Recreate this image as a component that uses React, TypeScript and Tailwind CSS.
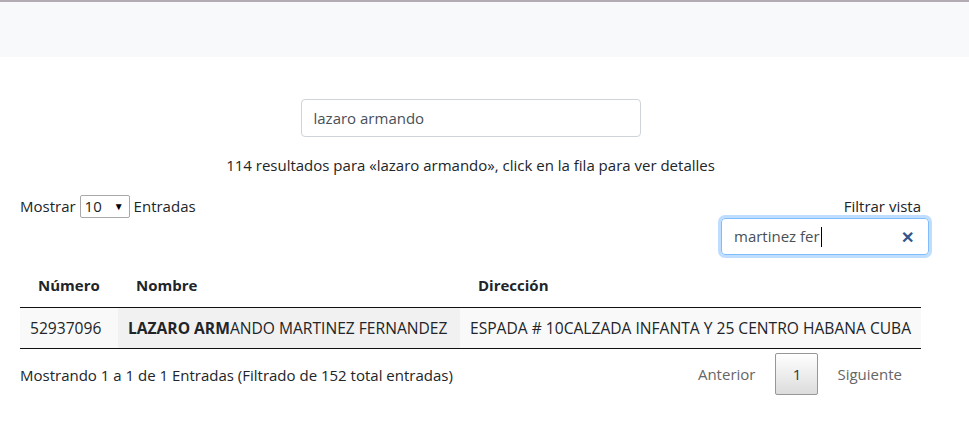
import { useState } from 'react';

const font = { fontFamily: '"Open Sans", "Noto Sans", sans-serif' };

export default function App() {
  const [query, setQuery] = useState('lazaro armando');

  return (
    <div className="min-h-[446px] bg-white text-[#212529] text-[15px]" style={font}>
      <div className="h-[57px] border-t-[2px] border-[#b3adb3] bg-[#f8f9fa]" />

      <div className="mx-[20px] w-[901px]">
        <div className="flex justify-center pt-[42px]">
          <input
            value={query}
            onChange={(e) => setQuery(e.target.value)}
            className="h-[38px] w-[340px] rounded-[4px] border border-[#ced4da] px-[12px] text-[15px] text-[#495057] outline-none"
            style={font}
          />
        </div>

        <p className="mt-[16px] text-center leading-[24px]">
          114 resultados para «lazaro armando», click en la fila para ver detalles
        </p>

        <div className="mt-[14px] flex items-start justify-between">
          <div className="mt-[4px] flex items-center gap-[4px]">
            <span>Mostrar</span>
            <div className="flex h-[23px] w-[50px] items-center justify-between rounded-[2px] border border-[#a9a9a9] pl-[4px] pr-[5px]">
              <span>10</span>
              <span className="text-[10px] text-black">▼</span>
            </div>
            <span>Entradas</span>
          </div>
          <div className="mt-[3px] flex flex-col items-end">
            <span className="leading-[24px]">Filtrar vista</span>
            <div className="mr-[-8px] flex h-[37px] w-[208px] items-center rounded-[4px] border border-[#80bdff] pl-[12px] pr-[14px] shadow-[0_0_0_3px_rgba(0,123,255,0.25)]">
              <div className="flex flex-1 items-center text-[#495057]">
                <span>martinez fer</span>
                <span className="ml-[1px] h-[20px] w-px bg-black" />
              </div>
              <span className="text-[16px] font-bold leading-none text-[#34558b]">✕</span>
            </div>
          </div>
        </div>

        <table className="mt-[8px] w-full table-fixed border-collapse">
          <thead>
            <tr className="border-b border-[#111]">
              <th className="w-[98px] px-[18px] py-[10px] text-left font-bold leading-[24px]">Número</th>
              <th className="w-[342px] px-[18px] py-[10px] text-left font-bold leading-[24px]">Nombre</th>
              <th className="px-[18px] py-[10px] text-left font-bold leading-[24px]">Dirección</th>
            </tr>
          </thead>
          <tbody className="text-[15.6px]">
            <tr className="border-b border-[#111] bg-[#f9f9f9]">
              <td className="px-[10px] py-[8px] leading-[24px]">52937096</td>
              <td className="whitespace-nowrap bg-[#f1f1f1] px-[10px] py-[8px] leading-[24px]">
                <b>LAZARO ARM</b>ANDO MARTINEZ FERNANDEZ
              </td>
              <td className="whitespace-nowrap px-[10px] py-[8px] leading-[24px]">
                ESPADA # 10CALZADA INFANTA Y 25 CENTRO HABANA CUBA
              </td>
            </tr>
          </tbody>
        </table>

        <div className="flex items-start justify-between">
          <span className="mt-[14px] leading-[24px]">
            Mostrando 1 a 1 de 1 Entradas (Filtrado de 152 total entradas)
          </span>
          <div className="mt-[4px] flex items-center">
            <span className="px-[20px] text-[#666]">Anterior</span>
            <span className="flex h-[42px] w-[43px] items-center justify-center rounded-[2px] border border-[#979797] bg-gradient-to-b from-white to-[#dcdcdc] text-[#333]">
              1
            </span>
            <span className="px-[19px] text-[#666]">Siguiente</span>
          </div>
        </div>
      </div>
    </div>
  );
}
